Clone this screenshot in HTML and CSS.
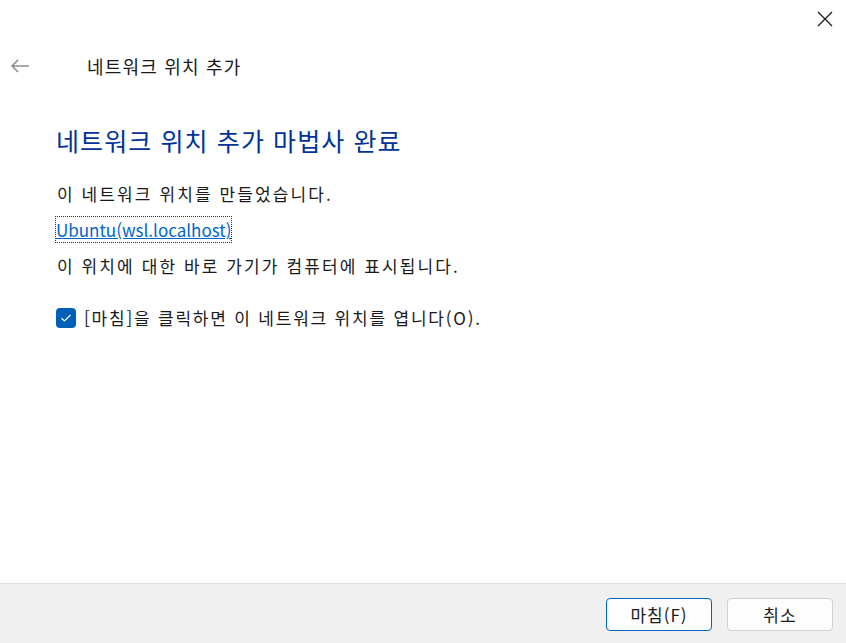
FILE: index.html
```html
<!DOCTYPE html>
<html lang="ko">
<head>
<meta charset="utf-8">
<link rel="stylesheet" href="styles.css">
</head>
<body>
<div class="window">
  <div class="titlebar">
    <button class="close" aria-label="닫기">
      <svg width="16" height="16" viewBox="0 0 16 16"><path d="M1 1 L15 15 M15 1 L1 15" stroke="#1a1a1a" stroke-width="1.3" fill="none"/></svg>
    </button>
  </div>
  <div class="header">
    <span class="back">
      <svg width="20" height="14" viewBox="0 0 20 14"><path d="M19 7 H2 M8 1 L2 7 L8 13" stroke="#8c8c8c" stroke-width="1.5" fill="none"/></svg>
    </span>
    <span class="header-title">네트워크 위치 추가</span>
  </div>
  <main class="content">
    <h1 class="instruction">네트워크 위치 추가 마법사 완료</h1>
    <p class="line first">이 네트워크 위치를 만들었습니다.</p>
    <p class="line"><a class="link" href="#">Ubuntu(wsl.localhost)</a></p>
    <p class="line">이 위치에 대한 바로 가기가 컴퓨터에 표시됩니다.</p>
    <label class="check-row">
      <span class="checkbox">
        <svg width="12" height="10" viewBox="0 0 12 10"><path d="M1.5 5.2 L4.5 8 L10.5 2" stroke="#fff" stroke-width="1.2" fill="none"/></svg>
      </span>
      <span class="check-label">[마침]을 클릭하면 이 네트워크 위치를 엽니다(O).</span>
    </label>
  </main>
  <footer class="footer">
    <button class="btn primary">마침(F)</button>
    <button class="btn">취소</button>
  </footer>
</div>
</body>
</html>
```

FILE: styles.css
```css
* { box-sizing: border-box; }
html, body { margin: 0; padding: 0; }
body {
  background: #ffffff;
  font-family: "Noto Sans CJK KR", "Noto Sans", sans-serif;
  color: #1a1a1a;
}
.window {
  width: 846px;
  height: 643px;
  display: flex;
  flex-direction: column;
}
.titlebar {
  height: 48px;
  display: flex;
  justify-content: flex-end;
  align-items: flex-start;
}
.close {
  border: 0;
  background: transparent;
  padding: 0;
  margin: 11px 13px 0 0;
  width: 16px;
  height: 16px;
  display: flex;
}
.header {
  height: 36px;
  display: flex;
  align-items: center;
}
.back {
  width: 20px;
  height: 14px;
  margin-left: 10px;
  display: flex;
}
.header-title {
  margin-left: 57px;
  font-size: 18px;
  letter-spacing: 1.2px;
  line-height: 36px;
  color: #1a1a1a;
}
.content {
  padding-left: 57px;
  flex: 1;
}
.instruction {
  margin: 40px 0 0 -1px;
  font-size: 25px;
  font-weight: normal;
  letter-spacing: 1.1px;
  line-height: 32px;
  color: #003399;
}
.line {
  margin: 12px 0 0 0;
  font-size: 17px;
  letter-spacing: 2.1px;
  line-height: 24px;
}
.line.first { margin-top: 26px; }
.link {
  color: #0066cc;
  font-size: 17px;
  letter-spacing: 0;
  text-decoration: underline;
  text-decoration-color: #0066cc;
  outline: 1px dotted #333;
  outline-offset: 0;
  margin-left: -1px;
}
.check-row {
  margin-top: 28px;
  height: 24px;
  display: flex;
  align-items: center;
}
.checkbox {
  width: 20px;
  height: 20px;
  margin-left: -1px;
  border-radius: 4px;
  background: #005fb8;
  display: flex;
  align-items: center;
  justify-content: center;
}
.check-label {
  margin-left: 8px;
  font-size: 17px;
  letter-spacing: 1.8px;
  line-height: 24px;
}
.footer {
  height: 60px;
  background: #f0f0f0;
  border-top: 1px solid #dfdfdf;
  display: flex;
  justify-content: flex-end;
  align-items: flex-start;
  gap: 15px;
  padding: 14px 13px 0 0;
}
.btn {
  width: 106px;
  height: 33px;
  border: 1px solid #d0d0d0;
  border-radius: 4px;
  background: #fdfdfd;
  font-family: "Noto Sans CJK KR", "Noto Sans", sans-serif;
  font-size: 17px;
  letter-spacing: 1px;
  color: #1a1a1a;
  padding: 0;
}
.btn.primary { border-color: #0067c0; }
```
